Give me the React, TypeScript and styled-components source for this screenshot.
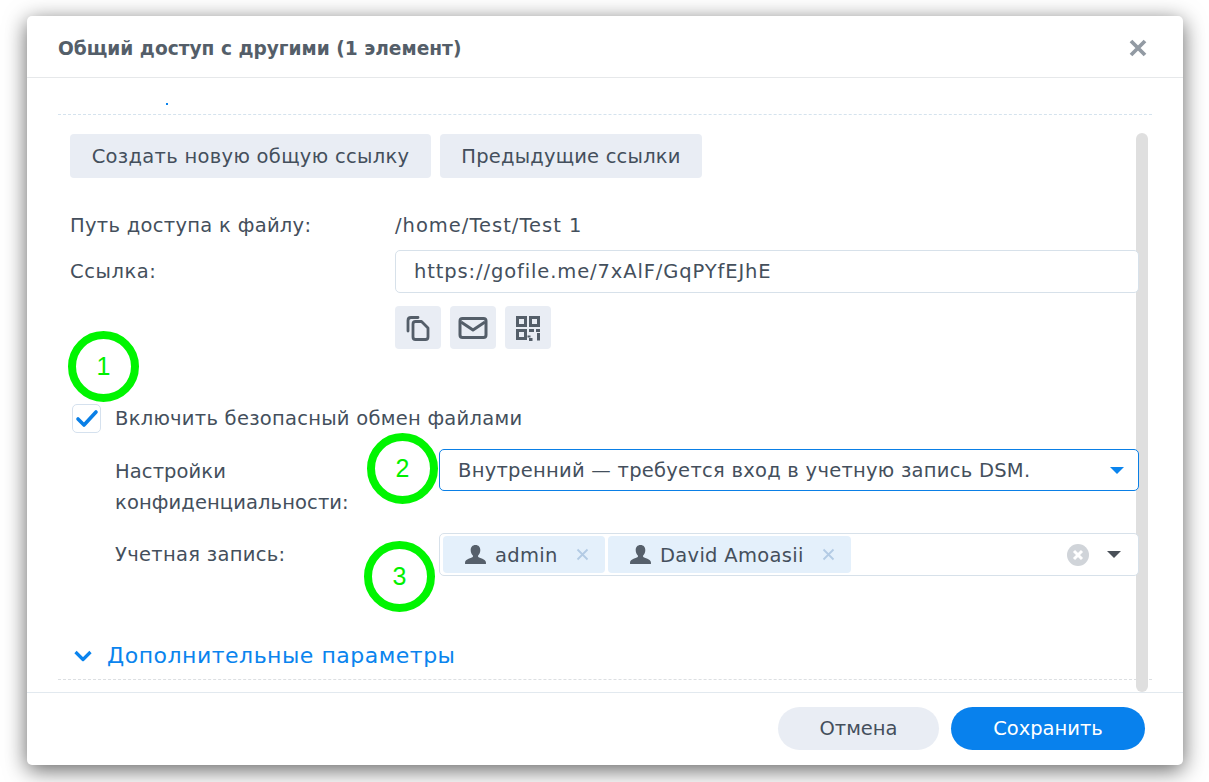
import { createGlobalStyle, styled } from "styled-components";

const GlobalStyle = createGlobalStyle`
  html {
    height: 782px;
    overflow: hidden;
  }
  body {
    box-sizing: border-box;
    height: 782px;
    margin: 0;
    padding: 16px 0 0;
    background: #fff;
    font-family: "DejaVu Sans", Verdana, sans-serif;
  }
`;

const Dialog = styled.div`
  position: relative;
  box-sizing: border-box;
  width: 1156px;
  height: 749px;
  margin-left: 27px;
  display: flex;
  flex-direction: column;
  background: #fff;
  border-radius: 5px;
  box-shadow: 0 5px 22px rgba(0, 0, 0, 0.62);
`;

const Header = styled.header`
  box-sizing: border-box;
  height: 62px;
  flex: none;
  display: flex;
  align-items: center;
  justify-content: space-between;
  padding: 3px 36px 0 31px;
  border-bottom: 1px solid #e6e8ea;
`;

const Title = styled.h1`
  margin: 0;
  font-size: 18.6px;
  font-weight: 700;
  color: #545e69;
`;

const CloseButton = styled.span`
  display: flex;
  color: #929aa3;
`;

const TopStrip = styled.div`
  position: relative;
  box-sizing: border-box;
  height: 37px;
  flex: none;
  margin: 0 31px;
  border-bottom: 1px dashed #d5e3ee;
`;

const Dot = styled.i`
  position: absolute;
  left: 108px;
  top: 25px;
  width: 2px;
  height: 2px;
  background: #0a84ee;
`;

const Content = styled.div`
  position: relative;
  z-index: 1;
  flex: 1;
  display: flex;
  flex-direction: column;
  padding: 19px 44px 0 43px;
`;

const ButtonRow = styled.div`
  display: flex;
  gap: 9px;
`;

const PlainButton = styled.button`
  box-sizing: border-box;
  height: 44px;
  width: ${(p) => p.$w}px;
  padding: 0;
  border: 0;
  border-radius: 4px;
  background: #e9edf4;
  color: #444f5c;
  font: 19.5px "DejaVu Sans", Verdana, sans-serif;
  letter-spacing: ${(p) => p.$spacing ?? 0.3}px;
`;

const FieldRow = styled.div`
  display: flex;
  align-items: ${(p) => p.$align || "center"};
  margin-top: ${(p) => p.$top}px;
`;

const Label = styled.div`
  width: ${(p) => p.$w}px;
  flex: none;
  box-sizing: border-box;
  padding-top: ${(p) => p.$pad || 0}px;
  font-size: 19.5px;
  line-height: 31px;
  letter-spacing: ${(p) => p.$spacing ?? 0.3}px;
  color: #444f5c;
`;

const Value = styled.div`
  font-size: 19.5px;
  line-height: 31px;
  letter-spacing: ${(p) => p.$spacing ?? 0.26}px;
  color: #444f5c;
`;

const TextBox = styled.div`
  box-sizing: border-box;
  flex: 1;
  height: ${(p) => p.$h}px;
  display: flex;
  align-items: center;
  padding: 0 18px;
  background: #fff;
  border: 1px solid ${(p) => (p.$focus ? "#0a7fe6" : "#d7e1ea")};
  border-radius: 5px;
  font-size: 19.5px;
  color: #444f5c;
  letter-spacing: ${(p) => p.$spacing ?? 0.26}px;
`;

const SelectText = styled.span`
  flex: 1;
`;

const IconRow = styled.div`
  display: flex;
  gap: 9px;
  margin: 13px 0 0 325px;
`;

const IconButton = styled.button`
  box-sizing: border-box;
  width: 46px;
  height: 43px;
  padding: 0;
  border: 0;
  border-radius: 4px;
  background: #e9edf4;
  display: flex;
  align-items: center;
  justify-content: center;
  color: #545e69;
`;

const CheckRow = styled.div`
  display: flex;
  align-items: center;
  gap: 14px;
  margin: 54px 0 0 2px;
`;

const CheckBox = styled.span`
  box-sizing: border-box;
  width: 29px;
  height: 29px;
  border: 1px solid #d5e1ee;
  border-radius: 5px;
  display: flex;
  align-items: center;
  justify-content: center;
`;

const SubSection = styled.div`
  display: flex;
  flex-direction: column;
  margin-left: 45px;
`;

const Caret = styled.i`
  width: 0;
  height: 0;
  flex: none;
  margin-right: -4px;
  border-left: 7.5px solid transparent;
  border-right: 7.5px solid transparent;
  border-top: 7px solid ${(p) => p.$color};
`;

const TagBox = styled(TextBox)`
  padding: 0 21px 0 3px;
  gap: 3px;
`;

const Tag = styled.div`
  box-sizing: border-box;
  width: ${(p) => p.$w}px;
  height: 37px;
  display: flex;
  align-items: center;
  padding-left: 21px;
  border-radius: 4px;
  background: #e4f0fb;
  font-size: 19.5px;
  letter-spacing: 0.3px;
  color: #444f5c;
`;

const TagName = styled.span`
  margin-left: 8px;
  flex: 1;
  line-height: 26px;
  padding-top: 2px;
`;

const TagClose = styled.span`
  display: flex;
  margin-right: 16px;
  color: #b3cbe4;
`;

const ClearIcon = styled.span`
  margin-left: auto;
  margin-right: 15px;
  display: flex;
`;

const Advanced = styled.div`
  display: flex;
  align-items: center;
  gap: 15px;
  margin: 63px 0 0 4px;
  color: #0a84ee;
  font-size: 22px;
  letter-spacing: 0.5px;
  line-height: 34px;
`;

const BottomDash = styled.div`
  margin: 0 31px;
  flex: none;
  border-bottom: 1px dashed #dcdfe2;
`;

const Footer = styled.footer`
  box-sizing: border-box;
  height: 73px;
  margin-top: 12px;
  flex: none;
  display: flex;
  justify-content: flex-end;
  align-items: flex-start;
  gap: 12px;
  padding: 14px 38px 0 0;
  border-top: 1px solid #e2e9ef;
`;

const PillButton = styled.button`
  box-sizing: border-box;
  width: ${(p) => p.$w}px;
  height: 43px;
  padding: 0;
  border: 0;
  border-radius: 22px;
  background: ${(p) => (p.$primary ? "#0881ed" : "#e9edf4")};
  color: ${(p) => (p.$primary ? "#fff" : "#444f5c")};
  font: 19.5px "DejaVu Sans", Verdana, sans-serif;
`;

const ScrollThumb = styled.div`
  position: absolute;
  left: 1109px;
  top: 117px;
  width: 12px;
  height: 559px;
  border-radius: 6px;
  background: #dfdfdf;
`;

const Marker = styled.div`
  position: absolute;
  z-index: 2;
  box-sizing: border-box;
  left: ${(p) => p.$x - 27}px;
  top: ${(p) => p.$y - 16}px;
  width: 71px;
  height: 71px;
  border: 8px solid #00f500;
  border-radius: 50%;
  display: flex;
  align-items: center;
  justify-content: center;
  color: #00f000;
  font-family: "Liberation Sans", Arial, sans-serif;
  font-size: 25px;
`;

const Person = () => (
  <svg width="23" height="22" viewBox="0 0 22 22" fill="#56606b" preserveAspectRatio="none">
    <path d="M11 1c3 0 4.600 2.200 4.600 5 0 2.300-.9 4.300-2.100 5.400v1.600c1 .9 7.500 2 7.500 5.500v1.500H1v-1.500c0-3.500 6.500-4.600 7.500-5.500v-1.600C7.300 10.300 6.400 8.300 6.400 6c0-2.800 1.600-5 4.600-5z" />
  </svg>
);

const SmallX = () => (
  <svg width="13" height="13" viewBox="0 0 13 13" stroke="currentColor" strokeWidth="1.800">
    <path d="M1.500 1.500l10 10M11.500 1.500l-10 10" />
  </svg>
);

export default function App() {
  return (
    <>
      <GlobalStyle />
      <Dialog>
        <Header>
          <Title>Общий доступ с другими (1 элемент)</Title>
          <CloseButton>
            <svg width="18" height="18" viewBox="0 0 18 18" stroke="currentColor" strokeWidth="3.800">
              <path d="M2 2l14 14M16 2L2 16" />
            </svg>
          </CloseButton>
        </Header>
        <TopStrip>
          <Dot />
        </TopStrip>
        <ScrollThumb />
        <Content>
          <ButtonRow>
            <PlainButton $w={361}>Создать новую общую ссылку</PlainButton>
            <PlainButton $w={262} $spacing={0.2}>Предыдущие ссылки</PlainButton>
          </ButtonRow>
          <FieldRow $top={32}>
            <Label $w={325}>Путь доступа к файлу:</Label>
            <Value $spacing={1}>/home/Test/Test 1</Value>
          </FieldRow>
          <FieldRow $top={9}>
            <Label $w={325} $spacing={0.55}>Ссылка:</Label>
            <TextBox $h={43} $spacing={0.88}>https://gofile.me/7xAlF/GqPYfEJhE</TextBox>
          </FieldRow>
          <IconRow>
            <IconButton>
              <svg width="28" height="28" viewBox="0 0 28 28" fill="none" stroke="currentColor" strokeWidth="2.800" strokeLinejoin="round">
                <path d="M4 17V6.500C4 4.800 5 3.500 7 3.500h7" strokeLinecap="round" />
                <path d="M9 10c0-1.500 1-2.500 2.500-2.500h6L24 14v9c0 1.500-1 2.500-2.500 2.500h-10C10 25.500 9 24.500 9 23z" />
              </svg>
            </IconButton>
            <IconButton>
              <svg width="30" height="24" viewBox="0 0 30 24" fill="none" stroke="currentColor" strokeWidth="3" strokeLinejoin="round">
                <rect x="2" y="2.500" width="26" height="19" rx="2.500" />
                <path d="M3 6l12 8 12-8" />
              </svg>
            </IconButton>
            <IconButton>
              <svg width="26" height="26" viewBox="0 0 26 26" fill="none" stroke="currentColor" strokeWidth="3">
                <rect x="2.500" y="2.500" width="8" height="8" />
                <rect x="15.500" y="2.500" width="8" height="8" />
                <rect x="2.500" y="15.500" width="8" height="8" />
                <path d="M14 15.500h5M14 20.500v2M17.500 24.500h-3.500M21 15.500h4M23.500 18v7.500" />
              </svg>
            </IconButton>
          </IconRow>
          <CheckRow>
            <CheckBox>
              <svg width="24" height="20" viewBox="0 0 24 20" fill="none" stroke="#0a7fe6" strokeWidth="3.600" strokeLinecap="round" strokeLinejoin="round">
                <path d="M3 10l6 6L21 3" />
              </svg>
            </CheckBox>
            <Value>Включить безопасный обмен файлами</Value>
          </CheckRow>
          <SubSection>
            <FieldRow $top={15} $align="flex-start">
              <Label $w={324} $pad={7} $spacing={0.1}>
                Настройки
                <br />
                конфиденциальности:
              </Label>
              <TextBox $h={42} $focus>
                <SelectText>Внутренний — требуется вход в учетную запись DSM.</SelectText>
                <Caret $color="#0a84ee" />
              </TextBox>
            </FieldRow>
            <FieldRow $top={15}>
              <Label $w={324}>Учетная запись:</Label>
              <TagBox $h={43}>
                <Tag $w={162}>
                  <Person />
                  <TagName>admin</TagName>
                  <TagClose>
                    <SmallX />
                  </TagClose>
                </Tag>
                <Tag $w={243}>
                  <Person />
                  <TagName>David Amoasii</TagName>
                  <TagClose>
                    <SmallX />
                  </TagClose>
                </Tag>
                <ClearIcon>
                  <svg width="22" height="22" viewBox="0 0 22 22">
                    <circle cx="11" cy="11" r="11" fill="#d0d4d9" />
                    <path d="M7 7l8 8M15 7l-8 8" stroke="#fff" strokeWidth="3" />
                  </svg>
                </ClearIcon>
                <Caret $color="#4a5058" />
              </TagBox>
            </FieldRow>
          </SubSection>
          <Advanced>
            <svg width="18" height="12" viewBox="0 0 18 12" fill="none" stroke="#0a84ee" strokeWidth="3.200" strokeLinejoin="round">
              <path d="M1.500 2L9 9.500 16.500 2" />
            </svg>
            Дополнительные параметры
          </Advanced>
        </Content>
        <BottomDash />
        <Footer>
          <PillButton $w={161}>Отмена</PillButton>
          <PillButton $w={194} $primary>
            Сохранить
          </PillButton>
        </Footer>
        <Marker $x={68} $y={331}>1</Marker>
        <Marker $x={367} $y={433}>2</Marker>
        <Marker $x={364} $y={541}>3</Marker>
      </Dialog>
    </>
  );
}
